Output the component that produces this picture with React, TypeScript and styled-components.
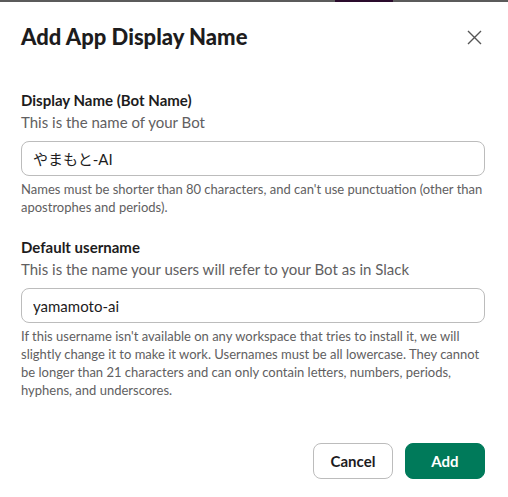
import React from "react";
import styled, { createGlobalStyle } from "styled-components";

const GlobalStyle = createGlobalStyle`
  body {
    margin: 0;
    background: #ffffff;
    font-family: Lato, "Noto Sans CJK JP", sans-serif;
    color: #1d1c1d;
  }
`;

const Page = styled.div`
  width: 508px;
  height: 497px;
  overflow: hidden;
  display: flex;
  flex-direction: column;
`;

const Backdrop = styled.div`
  height: 2px;
  flex-shrink: 0;
  background: linear-gradient(
    to right,
    #5b5b5b 0,
    #5b5b5b 335px,
    #2a0b2c 335px,
    #2a0b2c 393px,
    #5b5b5b 393px
  );
`;

const Header = styled.div`
  height: 70px;
  padding: 0 24px 0 21px;
  display: flex;
  align-items: center;
  justify-content: space-between;
`;

const Title = styled.h1`
  margin: 0;
  font-size: 22px;
  font-weight: 900;
  line-height: 28px;
`;

const CloseButton = styled.button`
  width: 28px;
  height: 28px;
  margin-right: -4px;
  padding: 0;
  border: none;
  background: transparent;
  display: flex;
  align-items: center;
  justify-content: center;
  color: #555;
`;

const Body = styled.div`
  padding: 17px 23px 0 21px;
  display: flex;
  flex-direction: column;
`;

const Field = styled.div<{ $gap?: number }>`
  display: flex;
  flex-direction: column;
  margin-top: ${(p) => p.$gap ?? 0}px;
`;

const Label = styled.label`
  font-size: 15px;
  font-weight: 700;
  line-height: 22px;
`;

const Description = styled.div`
  font-size: 15px;
  line-height: 22px;
  color: #616061;
`;

const Input = styled.input`
  box-sizing: border-box;
  height: 35px;
  margin-top: 8px;
  padding: 0 11px;
  border: 1px solid #bcbcbc;
  border-radius: 8px;
  font-family: Lato, "Noto Sans CJK JP", sans-serif;
  font-size: 15px;
  color: #1d1c1d;
  outline: none;
`;

const Hint = styled.div`
  margin-top: 4px;
  font-size: 13px;
  line-height: 18px;
  color: #616061;
`;

const Footer = styled.div`
  margin-top: 44px;
  padding: 0 23px 0 21px;
  display: flex;
  justify-content: flex-end;
  gap: 12px;
`;

const Button = styled.button<{ $primary?: boolean }>`
  box-sizing: border-box;
  height: 36px;
  min-width: 80px;
  padding: 0 12px;
  border-radius: 8px;
  font-family: Lato, sans-serif;
  font-size: 15px;
  font-weight: 700;
  border: 1px solid ${(p) => (p.$primary ? "#007a5a" : "#bcbcbc")};
  background: ${(p) => (p.$primary ? "#007a5a" : "#ffffff")};
  color: ${(p) => (p.$primary ? "#ffffff" : "#1d1c1d")};
`;

export default function App() {
  return (
    <Page>
      <GlobalStyle />
      <Backdrop />
      <Header>
        <Title>Add App Display Name</Title>
        <CloseButton aria-label="Close">
          <svg width="15" height="15" viewBox="0 0 15 15" fill="none">
            <path d="M1 1L14 14M14 1L1 14" stroke="currentColor" strokeWidth="1.4" />
          </svg>
        </CloseButton>
      </Header>
      <Body>
        <Field>
          <Label>Display Name (Bot Name)</Label>
          <Description>This is the name of your Bot</Description>
          <Input defaultValue="やまもと-AI" />
          <Hint>
            Names must be shorter than 80 characters, and can't use punctuation (other than
            apostrophes and periods).
          </Hint>
        </Field>
        <Field $gap={20}>
          <Label>Default username</Label>
          <Description>This is the name your users will refer to your Bot as in Slack</Description>
          <Input defaultValue="yamamoto-ai" />
          <Hint>
            If this username isn't available on any workspace that tries to install it, we will
            slightly change it to make it work. Usernames must be all lowercase. They cannot be
            longer than 21 characters and can only contain letters, numbers, periods, hyphens, and
            underscores.
          </Hint>
        </Field>
      </Body>
      <Footer>
        <Button>Cancel</Button>
        <Button $primary>Add</Button>
      </Footer>
    </Page>
  );
}
